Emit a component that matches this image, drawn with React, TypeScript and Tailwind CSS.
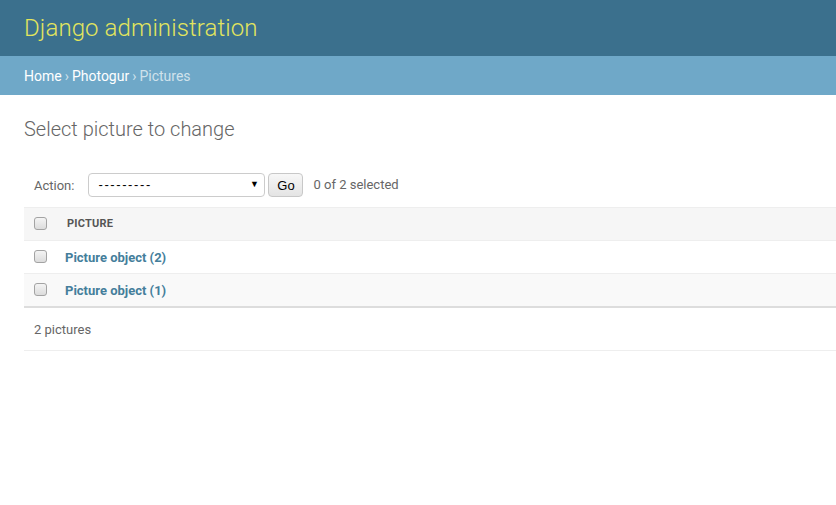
const rows = [
  { id: 2, label: "Picture object (2)" },
  { id: 1, label: "Picture object (1)" },
]

const Box = () => (
  <span className="block h-[13px] w-[13px] rounded-[3px] border border-[#a3a3a3] bg-gradient-to-b from-[#f4f4f4] to-[#dcdcdc]" />
)

export default function App() {
  return (
    <div className="min-h-[505px] w-[836px] overflow-hidden bg-white font-['Roboto','Liberation_Sans',sans-serif] text-[13px] text-[#333]">
      {/* header */}
      <div className="flex h-14 items-center bg-[#3b708d] px-6">
        <h1 className="text-[24px] font-light leading-none tracking-[0.1px] text-[#e2e55d]">Django administration</h1>
      </div>
      <div className="flex h-[39px] items-center bg-[#6fa8c8] px-6 pt-[2px] text-[14px] text-[#cfe2ec]">
        <a className="text-white">Home</a>
        <span className="mx-[3px]">›</span>
        <a className="text-white">Photogur</a>
        <span className="mx-[3px]">›</span>
        <span>Pictures</span>
      </div>

      {/* content */}
      <div className="pl-6">
        <h1 className="mt-[22px] text-[20px] font-light leading-6 text-[#666]">Select picture to change</h1>

        <div className="mt-6 flex h-10 items-center px-[10px] text-[#666]">
          <span className="mr-[14px] pt-[2px]">Action:</span>
          <div className="relative flex h-6 w-[177px] items-center rounded-[4px] border border-[#ccc] bg-white pl-[9px] font-['Liberation_Sans',sans-serif] text-[13px] tracking-[1.6px] text-black">
            ---------
            <span className="absolute right-[4px] top-[4px] text-[9px] text-black">▼</span>
          </div>
          <button className="ml-[3px] h-6 w-[35px] rounded-[4px] border border-[#c8c8c8] bg-gradient-to-b from-[#f7f7f7] to-[#e4e4e4] pt-px font-['Liberation_Sans',sans-serif] text-[13px] text-black">
            Go
          </button>
          <span className="ml-[10px]">0 of 2 selected</span>
        </div>

        <div className="mt-[2px]">
          <div className="flex h-[34px] items-center border-y border-[#eee] bg-[#f6f6f6]">
            <div className="w-[43px] pl-[10px] -mt-[2px]"><Box /></div>
            <span className="pt-px text-[11px] font-bold uppercase tracking-[0.2px] text-[#555]">Picture</span>
          </div>
          {rows.map((r, i) => (
            <div
              key={r.id}
              className={
                i === 1
                  ? "flex h-[34px] items-center border-b-2 border-[#ddd] bg-[#f9f9f9]"
                  : "flex h-[33px] items-center border-b border-[#eee] bg-white"
              }
            >
              <div className="w-[41px] pl-[10px] -mt-[2px]"><Box /></div>
              <a className="pt-[2px] font-bold text-[#447e9b]">{r.label}</a>
            </div>
          ))}
          <div className="flex h-[43px] items-center border-b border-[#eee] px-[10px] pt-[2px] text-[#666]">2 pictures</div>
        </div>
      </div>
    </div>
  )
}
